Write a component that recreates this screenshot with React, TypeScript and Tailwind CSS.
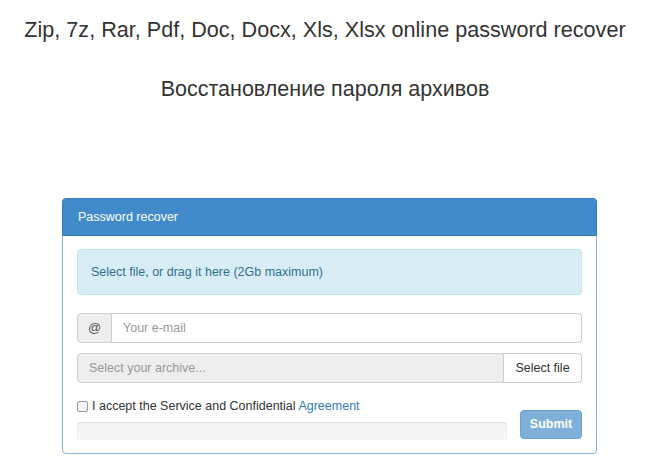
import React from "react";

const font = { fontFamily: '"Liberation Sans", Arial, sans-serif' };

const App = () => {
  return (
    <div className="min-h-[473px] bg-white text-[#333]" style={font}>
      {/* titles */}
      <h1 className="pt-[19px] text-center text-[21.6px] leading-[22px] font-normal">
        Zip, 7z, Rar, Pdf, Doc, Docx, Xls, Xlsx online password recover
      </h1>
      <h2 className="mt-[37px] text-center text-[21.5px] leading-[22px] font-normal">
        Восстановление пароля архивов
      </h2>

      {/* panel */}
      <div className="ml-[62px] mt-[98px] w-[535px] rounded-[4px] border border-[#8fb1cf] bg-white">
        <div className="-mx-px -mt-px flex h-[38px] items-center rounded-t-[4px] border border-[#357ebd] bg-[#428bca] px-[15px] text-[12.5px] text-white">
          Password recover
        </div>
        <div className="px-[14px] pt-[13px] pb-[13px]">
          <div className="flex h-[46px] items-center rounded-[4px] border border-[#bce8f1] bg-[#d9edf7] px-[13px] text-[12.5px] text-[#31708f]">
            Select file, or drag it here (2Gb maximum)
          </div>

          <div className="mt-[18px] flex h-[30px]">
            <span className="flex w-[35px] items-center justify-center rounded-l-[4px] border border-[#ccc] bg-[#eee] text-[13px] text-[#555]">
              @
            </span>
            <div className="flex flex-1 items-center rounded-r-[4px] border border-l-0 border-[#ccc] bg-white px-[11px] text-[12.5px] text-[#999]">
              Your e-mail
            </div>
          </div>

          <div className="mt-[10px] flex h-[30px]">
            <div className="flex flex-1 items-center rounded-l-[4px] border border-[#ccc] bg-[#eee] px-[11px] text-[12.5px] text-[#999]">
              Select your archive...
            </div>
            <button className="w-[78px] rounded-r-[4px] border border-l-0 border-[#ccc] bg-white text-[12.5px] text-[#333]">
              Select file
            </button>
          </div>

          <div className="mt-[16px] flex items-end gap-[13px]">
            <div className="flex-1">
              <label className="flex items-center gap-[4px] text-[12.5px] leading-[14px]">
                <span className="h-[11px] w-[11px] rounded-[2px] border border-[#999] bg-[#f4f4f4]" />
                <span>
                  I accept the Service and Confidential{" "}
                  <span className="text-[#337ab7]">Agreement</span>
                </span>
              </label>
              <div className="mt-[9px] h-[18px] rounded-[4px] bg-[#f5f5f5] shadow-[inset_0_1px_2px_rgba(0,0,0,0.1)]" />
            </div>
            <button className="mb-px h-[29px] w-[62px] rounded-[4px] border border-[#6a9fcd] bg-[#7fb0da] text-[12.5px] font-bold text-white">
              Submit
            </button>
          </div>
        </div>
      </div>
    </div>
  );
};

export default App;
